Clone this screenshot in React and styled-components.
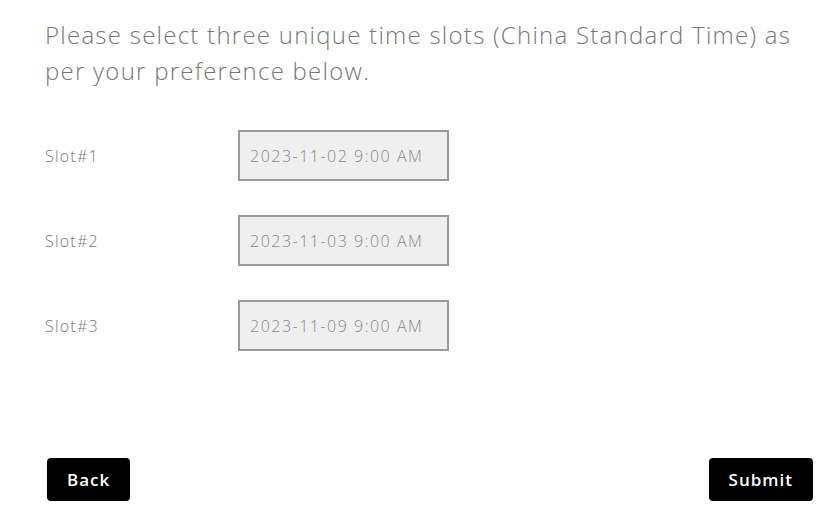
import React from 'react';
import styled, { createGlobalStyle } from 'styled-components';

const GlobalStyle = createGlobalStyle`
  body {
    margin: 0;
    background: #fff;
    font-family: "Open Sans", "Liberation Sans", sans-serif;
  }
`;

const Page = styled.div`
  padding: 17px 19px 0 45px;
`;

const Intro = styled.p`
  margin: 0 0 41px;
  font-size: 24px;
  line-height: 36px;
  font-weight: 300;
  letter-spacing: 1.25px;
  color: #777;
  max-width: 760px;
`;

const SlotList = styled.div`
  display: flex;
  flex-direction: column;
  gap: 34px;
`;

const SlotRow = styled.div`
  display: flex;
  align-items: center;
`;

const SlotLabel = styled.label`
  width: 193px;
  font-size: 16px;
  font-weight: 300;
  letter-spacing: 1.2px;
  color: #777;
`;

const SlotValue = styled.div`
  box-sizing: border-box;
  height: 51px;
  display: flex;
  align-items: center;
  padding: 0 24px 0 10px;
  border: 2px solid #9a9a9a;
  background: #efefef;
  font-size: 16px;
  font-weight: 300;
  letter-spacing: 1.5px;
  color: #888;
`;

const Footer = styled.div`
  display: flex;
  justify-content: space-between;
  margin-top: 107px;
  padding-left: 2px;
`;

const Button = styled.button`
  box-sizing: border-box;
  height: 43px;
  padding: 0 20px;
  border: none;
  border-radius: 4px;
  background: #000;
  color: #fff;
  font-family: "Open Sans", "Liberation Sans", sans-serif;
  font-size: 17px;
  font-weight: 600;
  letter-spacing: 1px;
`;

const slots = [
  { label: 'Slot#1', value: '2023-11-02 9:00 AM' },
  { label: 'Slot#2', value: '2023-11-03 9:00 AM' },
  { label: 'Slot#3', value: '2023-11-09 9:00 AM' },
];

export default function App() {
  return (
    <>
      <GlobalStyle />
      <Page>
        <Intro>
          Please select three unique time slots (China Standard Time) as per your preference below.
        </Intro>
        <SlotList>
          {slots.map(s => (
            <SlotRow key={s.label}>
              <SlotLabel>{s.label}</SlotLabel>
              <SlotValue>{s.value}</SlotValue>
            </SlotRow>
          ))}
        </SlotList>
        <Footer>
          <Button>Back</Button>
          <Button>Submit</Button>
        </Footer>
      </Page>
    </>
  );
}
